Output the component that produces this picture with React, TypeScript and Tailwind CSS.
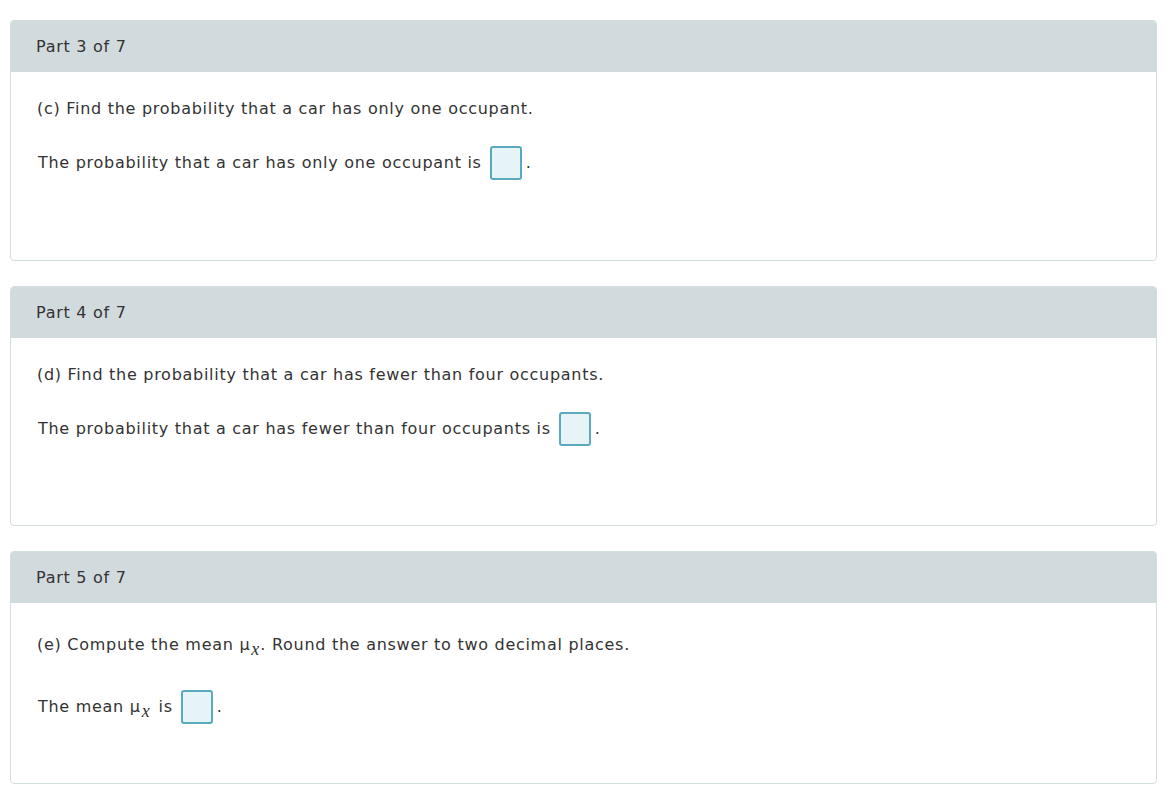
export default function App() {
  return (
    <div className="min-h-[800px] bg-white pt-[20px] pl-[10px] pr-[15px] font-['DejaVu_Sans',sans-serif] text-[16px] tracking-[0.72px] text-[#333]">
      <div className="flex flex-col gap-[25px]">
        <PartCard part={3} bodyClass="pt-[25px] pb-[80px]">
          <p className="leading-[24px] pl-[26px]">(c) Find the probability that a car has only one occupant.</p>
          <div className="mt-[25px] pl-[27px] flex items-center">
            <span>The probability that a car has only one occupant is</span>
            <AnswerBox />
          </div>
        </PartCard>
        <PartCard part={4} bodyClass="pt-[25px] pb-[79px]">
          <p className="leading-[24px] pl-[26px]">(d) Find the probability that a car has fewer than four occupants.</p>
          <div className="mt-[25px] pl-[27px] flex items-center">
            <span>The probability that a car has fewer than four occupants is</span>
            <AnswerBox />
          </div>
        </PartCard>
        <PartCard part={5} bodyClass="pt-[30px] pb-[59px]">
          <p className="leading-[24px] pl-[26px]">
            (e) Compute the mean <Mu gap="mr-[1px]" />. Round the answer to two decimal places.
          </p>
          <div className="mt-[33px] pl-[27px] flex items-center">
            <span>
              The mean <Mu gap="mr-[3px]" /> is
            </span>
            <AnswerBox />
          </div>
        </PartCard>
      </div>
    </div>
  );
}

function Mu({ gap }: { gap: string }) {
  return (
    <span className="whitespace-nowrap">
      μ
      <span className={`relative top-[5px] ml-[1px] ${gap} font-['Liberation_Serif',serif] text-[18px] italic leading-none tracking-normal`}>
        x
      </span>
    </span>
  );
}

function AnswerBox() {
  return (
    <>
      <span className="ml-[8px] inline-block h-[34px] w-[32px] rounded-[3px] border-2 border-[#5aaabd] bg-[#e6f4f8]" />
      <span className="ml-[4px]">.</span>
    </>
  );
}

function PartCard({ part, bodyClass, children }: { part: number; bodyClass: string; children: React.ReactNode }) {
  return (
    <div className="overflow-hidden rounded-[4px] border border-[#d3dcdf]">
      <div className="flex h-[51px] items-center bg-[#d1dadd] px-[25px]">Part {part} of 7</div>
      <div className={bodyClass}>{children}</div>
    </div>
  );
}
